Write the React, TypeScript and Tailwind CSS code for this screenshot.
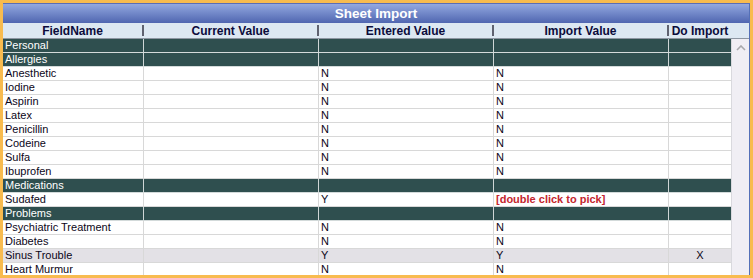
import React from "react";

type Row =
  | { kind: "section"; name: string }
  | { kind: "item"; name: string; entered: string; imp: string; red?: boolean; doImp?: string; hl?: boolean };

const rows: Row[] = [
  { kind: "section", name: "Personal" },
  { kind: "section", name: "Allergies" },
  { kind: "item", name: "Anesthetic", entered: "N", imp: "N" },
  { kind: "item", name: "Iodine", entered: "N", imp: "N" },
  { kind: "item", name: "Aspirin", entered: "N", imp: "N" },
  { kind: "item", name: "Latex", entered: "N", imp: "N" },
  { kind: "item", name: "Penicillin", entered: "N", imp: "N" },
  { kind: "item", name: "Codeine", entered: "N", imp: "N" },
  { kind: "item", name: "Sulfa", entered: "N", imp: "N" },
  { kind: "item", name: "Ibuprofen", entered: "N", imp: "N" },
  { kind: "section", name: "Medications" },
  { kind: "item", name: "Sudafed", entered: "Y", imp: "[double click to pick]", red: true },
  { kind: "section", name: "Problems" },
  { kind: "item", name: "Psychiatric Treatment", entered: "N", imp: "N" },
  { kind: "item", name: "Diabetes", entered: "N", imp: "N" },
  { kind: "item", name: "Sinus Trouble", entered: "Y", imp: "Y", doImp: "X", hl: true },
  { kind: "item", name: "Heart Murmur", entered: "N", imp: "N" },
];

function HeaderCell({ label, w, sep }: { label: string; w: string; sep: boolean }) {
  return (
    <div className={`${w} flex items-center h-full shrink-0`}>
      <div className="flex-1 text-center leading-[14px]">{label}</div>
      {sep ? <div className="w-[2px] h-[11px] bg-[#5f6270]" /> : null}
    </div>
  );
}

export default function App() {
  return (
    <div
      className="w-[753px] h-[278px] bg-[#f8bb4f] p-[3px] overflow-hidden"
      style={{ fontFamily: '"Liberation Sans", Arial, sans-serif' }}
    >
      <div className="h-[272px] flex flex-col border-r border-[#5470b8] bg-white overflow-hidden">
        {/* title */}
        <div className="h-[20px] shrink-0 flex items-center justify-center bg-gradient-to-b from-[#94a8e0] to-[#5066b0] border-t border-[#5a6db5] text-white font-bold text-[13.5px] leading-[18px]">
          Sheet Import
        </div>
        {/* header */}
        <div className="h-[16px] shrink-0 flex bg-[#dde8f2] border-b border-[#8d96a2] text-[12px] font-bold text-[#0b0b3b]">
          <HeaderCell label="FieldName" w="w-[141px]" sep />
          <HeaderCell label="Current Value" w="w-[175px]" sep />
          <HeaderCell label="Entered Value" w="w-[175px]" sep />
          <HeaderCell label="Import Value" w="w-[175px]" sep />
          <HeaderCell label="Do Import" w="w-[62px]" sep={false} />
          <div className="flex-1" />
        </div>
        {/* body */}
        <div className="flex flex-1 min-h-0">
          <div className="w-[728px] shrink-0 flex flex-col text-[11px]">
            {rows.map((r, i) =>
              r.kind === "section" ? (
                <div key={i} className="h-[14px] shrink-0 flex bg-[#2f4f4f] text-white border-b border-[#d3dada] leading-[13px]">
                  <div className="w-[141px] pl-[2px] border-r border-[#cfd6d6]">{r.name}</div>
                  <div className="w-[175px] border-r border-[#cfd6d6]" />
                  <div className="w-[175px] border-r border-[#cfd6d6]" />
                  <div className="w-[175px] border-r border-[#cfd6d6]" />
                  <div className="w-[62px]" />
                </div>
              ) : (
                <div
                  key={i}
                  className={`h-[14px] shrink-0 flex border-b border-[#d8d8d8] leading-[13px] text-[#0c0618] ${r.hl ? "bg-[#e3e1e6]" : "bg-white"}`}
                >
                  <div className="w-[141px] pl-[2px] border-r border-[#d8d8d8] whitespace-nowrap">{r.name}</div>
                  <div className="w-[175px] border-r border-[#d8d8d8]" />
                  <div className="w-[175px] pl-[2px] border-r border-[#d8d8d8]">{r.entered}</div>
                  <div className={`w-[175px] pl-[2px] border-r border-[#d8d8d8] whitespace-nowrap ${r.red ? "text-[#c4262e] font-bold" : ""}`}>
                    {r.imp}
                  </div>
                  <div className="w-[62px] text-center">{r.doImp ?? ""}</div>
                </div>
              )
            )}
          </div>
          {/* scrollbar */}
          <div className="flex-1 bg-[#f0eef4] border-l border-[#d9d9de] flex justify-center pt-[6px]">
            <svg width="10" height="6" viewBox="0 0 10 6" className="block">
              <path d="M1 5 L5 1 L9 5" fill="none" stroke="#a8a8ac" strokeWidth="1.6" />
            </svg>
          </div>
        </div>
      </div>
    </div>
  );
}
